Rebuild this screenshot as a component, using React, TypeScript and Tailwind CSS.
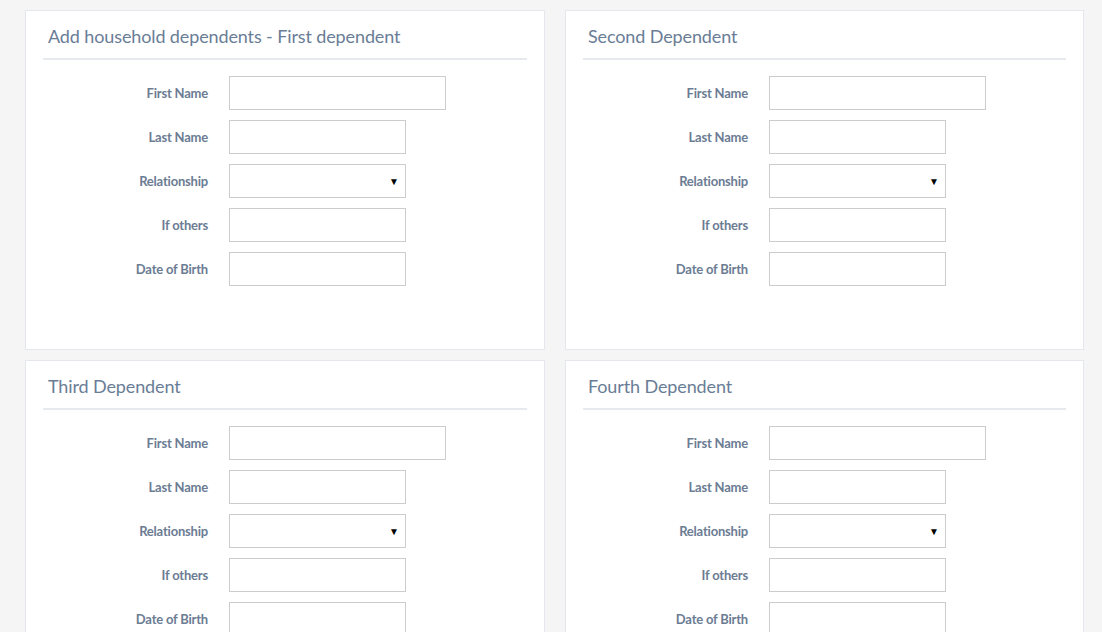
import React from 'react';

type Field = { label: string; kind: 'text' | 'select'; wide?: boolean };

const FIELDS: Field[] = [
  { label: 'First Name', kind: 'text', wide: true },
  { label: 'Last Name', kind: 'text' },
  { label: 'Relationship', kind: 'select' },
  { label: 'If others', kind: 'text' },
  { label: 'Date of Birth', kind: 'text' },
];

const PANELS = [
  'Add household dependents - First dependent',
  'Second Dependent',
  'Third Dependent',
  'Fourth Dependent',
];

const FieldRow: React.FC<{ field: Field }> = ({ field }) => (
  <div className="flex items-center gap-[21px]">
    <label className="w-[165px] shrink-0 pt-[2px] text-right text-[13px] font-bold tracking-[-0.2px] text-[#6b7c93]">
      {field.label}
    </label>
    {field.kind === 'select' ? (
      <div className="relative h-[34px] w-[177px] border border-[#cccccc] bg-white">
        <span className="absolute right-[6px] top-1/2 -translate-y-1/2 text-[10px] leading-none text-black">▼</span>
      </div>
    ) : (
      <input
        className={`h-[34px] border border-[#cccccc] bg-white outline-none ${field.wide ? 'w-[217px]' : 'w-[177px]'}`}
      />
    )}
  </div>
);

const Panel: React.FC<{ title: string }> = ({ title }) => (
  <div className="border border-[#e4e7eb] bg-white px-[17px] pb-[63px]">
    <div className="border-b-2 border-[#e6e9ed] px-[5px] pt-[12px] pb-[9px]">
      <h2 className="text-[18px] leading-[26px] font-normal tracking-[-0.12px] text-[#6a7d96]">{title}</h2>
    </div>
    <div className="mt-[16px] flex flex-col gap-[10px]">
      {FIELDS.map((f) => (
        <FieldRow key={f.label} field={f} />
      ))}
    </div>
  </div>
);

const App: React.FC = () => {
  return (
    <div
      className="h-[632px] w-[1102px] overflow-hidden bg-[#f5f5f5] pt-[10px] pl-[25px]"
      style={{ fontFamily: 'Lato, "Open Sans", sans-serif' }}
    >
      <div className="grid grid-cols-[520px_519px] gap-x-[20px] gap-y-[10px]">
        {PANELS.map((t) => (
          <Panel key={t} title={t} />
        ))}
      </div>
    </div>
  );
};

export default App;
